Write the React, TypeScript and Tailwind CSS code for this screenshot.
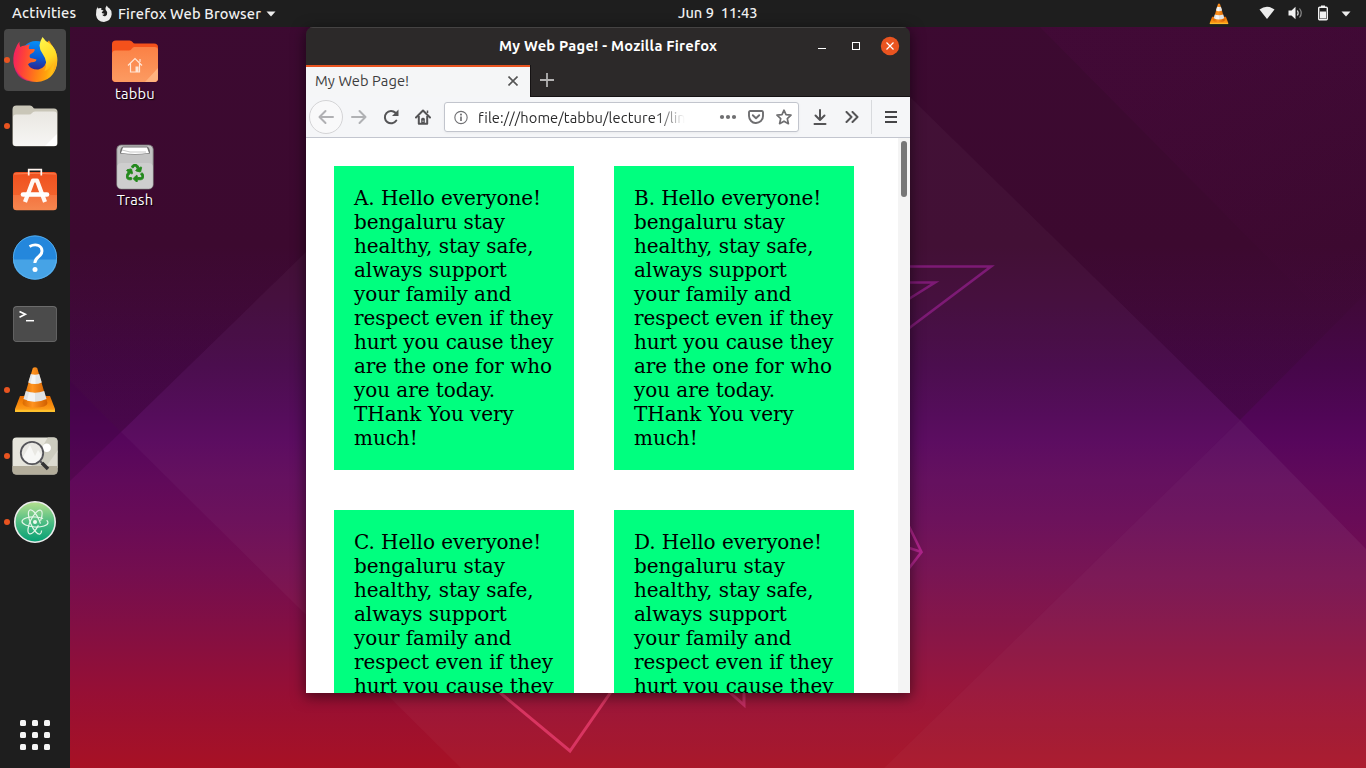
import React from "react";
import { FaRecycle } from "react-icons/fa";

const MESSAGE_LINES = [
  "Hello everyone!",
  "bengaluru stay",
  "healthy, stay safe,",
  "always support",
  "your family and",
  "respect even if they",
  "hurt you cause they",
  "are the one for who",
  "you are today.",
  "THank You very",
  "much!",
];

function Wallpaper() {
  return (
    <svg className="absolute inset-0" width="1366" height="768" viewBox="0 0 1366 768" aria-hidden="true">
      <defs>
        <linearGradient id="sky" gradientUnits="userSpaceOnUse" x1="0" y1="0" x2="0" y2="768">
          <stop offset="0" stopColor="#3c0a31" />
          <stop offset="0.32" stopColor="#3c092f" />
          <stop offset="0.4" stopColor="#41093a" />
          <stop offset="0.475" stopColor="#460749" />
          <stop offset="0.54" stopColor="#500656" />
          <stop offset="0.575" stopColor="#57065c" />
          <stop offset="0.625" stopColor="#600a5a" />
          <stop offset="0.675" stopColor="#680b57" />
          <stop offset="0.745" stopColor="#740e4f" />
          <stop offset="0.818" stopColor="#830f43" />
          <stop offset="0.9" stopColor="#960f35" />
          <stop offset="0.98" stopColor="#a41128" />
          <stop offset="1" stopColor="#a81124" />
        </linearGradient>
        <linearGradient id="shade" gradientUnits="userSpaceOnUse" x1="0" y1="250" x2="0" y2="420">
          <stop offset="0" stopColor="#2a0a12" stopOpacity="0" />
          <stop offset="1" stopColor="#2a0a20" stopOpacity="0.24" />
        </linearGradient>
        <linearGradient id="corner" gradientUnits="userSpaceOnUse" x1="1200" y1="60" x2="1300" y2="290">
          <stop offset="0" stopColor="#5a0850" stopOpacity="0.16" />
          <stop offset="1" stopColor="#5a0850" stopOpacity="0.02" />
        </linearGradient>
      </defs>
      <rect width="1366" height="768" fill="url(#sky)" />
      <polygon points="70,27 306,27 306,252 121,432 70,381" fill="url(#shade)" />
      <polygon points="70,381 121,432 70,481" fill="#200020" opacity="0.18" />
      <polygon points="306,252 910,97 1240,420 884,768 461,768 121,432" fill="#fff" opacity="0.03" />
      <polygon points="910,97 910,27 1366,27 1366,293 1240,420" fill="url(#shade)" />
      <polygon points="1040,27 1366,27 1366,300 1310,300" fill="url(#corner)" />
      <polygon points="1240,420 1366,549 1366,768 884,768" fill="#fff" opacity="0.05" />
      <g fill="none" stroke="#7d1a75" strokeWidth="2.600">
        <path d="M880 266.500H991L880 350" />
        <path d="M880 282.500H935L880 317" />
      </g>
      <path d="M900 508L921.500 552L900 580M900 545L921.500 552" fill="none" stroke="#b0258c" strokeWidth="2.600" />
      <path d="M480 676L570 751L622 676" fill="none" stroke="#d93561" strokeWidth="3" />
      <path d="M718 682L744 705V682" fill="none" stroke="#c42e63" strokeWidth="3" />
    </svg>
  );
}

function Cone({ size, id }: { size: number; id: string }) {
  return (
    <svg width={size} height={size} viewBox="0 0 48 48" aria-hidden="true">
      <defs>
        <linearGradient id={id} x1="0" x2="1" y1="0" y2="0">
          <stop offset="0" stopColor="#d96a00" />
          <stop offset="0.4" stopColor="#ff9320" />
          <stop offset="1" stopColor="#d05f00" />
        </linearGradient>
        <linearGradient id={id + "b"} x1="0" x2="0" y1="0" y2="1">
          <stop offset="0" stopColor="#e86a00" />
          <stop offset="0.55" stopColor="#f78a0c" />
          <stop offset="1" stopColor="#ffa51f" />
        </linearGradient>
      </defs>
      <path d="M9 30H39L44 43V45.500H4V43Z" fill={"url(#" + id + "b)"} />
      <path d="M4 43.800H44V46H4Z" fill="#ffc02c" />
      <path d="M21.800 2Q24 0.500 26.200 2L36.500 37Q36 41.500 24 41.500T11.500 37Z" fill={"url(#" + id + ")"} />
      <path d="M19.800 8Q24 9.500 28.200 8L30.800 16.500Q24 19.500 17.200 16.500Z" fill="#e4e6e8" />
      <path d="M14.800 25Q24 28.500 33.200 25L35.500 33Q24 38.500 12.500 33Z" fill="#e0e2e4" />
      <path d="M21.500 8.800L24.500 8.900V18L19.500 17.400ZM18 26.300L24 27.100V35.700L16 34.700Z" fill="#fff" opacity="0.6" />
    </svg>
  );
}

function FirefoxLogo() {
  return (
    <svg width="48" height="48" viewBox="0 0 48 48" aria-hidden="true">
      <defs>
        <linearGradient id="globe" x1="0.6" y1="0" x2="0.5" y2="1">
          <stop offset="0" stopColor="#0690f8" />
          <stop offset="0.5" stopColor="#0a5ed6" />
          <stop offset="1" stopColor="#35167c" />
        </linearGradient>
        <linearGradient id="fox" x1="0" y1="0.35" x2="1" y2="0.5">
          <stop offset="0" stopColor="#f2215f" />
          <stop offset="0.25" stopColor="#ff4338" />
          <stop offset="0.55" stopColor="#ff7a18" />
          <stop offset="0.8" stopColor="#ffa40c" />
          <stop offset="1" stopColor="#ffd21f" />
        </linearGradient>
        <linearGradient id="flame" x1="0.3" y1="0" x2="0.6" y2="1">
          <stop offset="0" stopColor="#fff44a" />
          <stop offset="0.55" stopColor="#ffdc25" />
          <stop offset="1" stopColor="#ff9a10" />
        </linearGradient>
      </defs>
      <circle cx="25" cy="21" r="16" fill="url(#globe)" />
      <path
        d="M8.500 5.500Q8 8.500 9.200 11Q11.500 9.200 15 9.500Q17 8.500 19 8.200Q17.500 10.500 18 13H23.500Q24.300 14.500 22.500 16.200L18.800 18.700Q18.200 21.500 19.500 22Q23 22.500 25.500 23.500Q25 26.500 20.500 26.200Q17.500 27 17 28.500Q20 34 27.500 33.500Q35.500 31.500 36 22Q36 15 31 11L38 4.500Q40 8 43.500 13Q47.500 21 46 28Q43 44.500 26 46Q8.500 46 3.200 31Q1 22 4 14Q5.500 9 8.500 5.500Z"
        fill="url(#fox)"
      />
      <path
        d="M31.500 1Q29 5 28.500 9.500Q28.500 14 32 18.500Q37.500 26 33.500 35Q39 33.500 42 27Q44.500 36 38 40.500Q46.500 35 46 23Q45.500 12 38.500 7.500Q34 5 31.500 1Z"
        fill="url(#flame)"
      />
      <path d="M3.500 30Q9 43.500 23 45.500Q9 46 4.500 35Z" fill="#d8138a" opacity="0.55" />
    </svg>
  );
}

function FilesIcon() {
  return (
    <svg width="48" height="48" viewBox="0 0 48 48" aria-hidden="true">
      <defs>
        <linearGradient id="paper" x1="0" y1="0" x2="0" y2="1">
          <stop offset="0" stopColor="#e9e7e2" />
          <stop offset="1" stopColor="#f7f6f4" />
        </linearGradient>
      </defs>
      <path d="M5.500 3.500H19Q21 3.500 21.800 5T24 6.500H43Q46.500 6.500 46.500 10V41Q46.500 44.300 43 44.300H5Q1.500 44.300 1.500 41V7.500Q1.500 3.500 5.500 3.500Z" fill="#c9c6b8" />
      <path d="M2 15.500Q2 12.500 5 12.500H18Q20 12.500 21 11T24 9.500H43Q46 9.500 46 12.500V41Q46 44 43 44H5Q2 44 2 41Z" fill="url(#paper)" />
      <path d="M46 32V41Q46 44 43 44H34Z" fill="#fff" />
    </svg>
  );
}

function SoftwareIcon() {
  return (
    <svg width="48" height="48" viewBox="0 0 48 48" aria-hidden="true">
      <defs>
        <linearGradient id="bag" x1="0" y1="0" x2="0" y2="1">
          <stop offset="0" stopColor="#f0501f" />
          <stop offset="0.6" stopColor="#f2622c" />
          <stop offset="0.61" stopColor="#f47440" />
          <stop offset="1" stopColor="#f5864f" />
        </linearGradient>
      </defs>
      <rect x="2" y="4" width="44" height="38.300" rx="3.500" fill="url(#bag)" />
      <path d="M3 6Q24 4.500 45 6" fill="none" stroke="#fa8a5c" strokeWidth="0.900" />
      <path d="M17.700 7.500V1.700H30.300V7.500" fill="none" stroke="#fff4ee" strokeWidth="1.700" />
      <path d="M14 34L22 12.500H26L34 34" fill="none" stroke="#fff8f4" strokeWidth="4.200" strokeLinejoin="round" />
      <path d="M12 26.500H36" stroke="#fff" strokeWidth="4.600" strokeLinecap="round" />
    </svg>
  );
}

function HelpIcon() {
  return (
    <svg width="48" height="48" viewBox="0 0 48 48" aria-hidden="true">
      <circle cx="24" cy="24" r="22" fill="#2487dc" transform="translate(0 -0.500)" />
      <path d="M2 25.500H46A22 20 0 0 1 2 25.500Z" fill="#46a3e6" />
      <circle cx="24" cy="23.500" r="21.600" fill="none" stroke="#5fb4ee" strokeWidth="0.800" />
      <path d="M18.500 12.500Q23.500 9.800 27.500 11.500Q31 13 31 17Q31 20 27.800 22.500Q24 25.500 23.800 29" fill="none" stroke="#fff" strokeWidth="2.900" />
      <circle cx="24" cy="35.500" r="2.500" fill="#fff" />
    </svg>
  );
}

function TerminalIcon() {
  return (
    <svg width="48" height="48" viewBox="0 0 48 48" aria-hidden="true">
      <rect x="2" y="6" width="44" height="36" rx="4" fill="#6c6c6c" />
      <rect x="2.700" y="7" width="42.600" height="34.300" rx="3.500" fill="#4b4b4b" />
      <path d="M8.500 11.500L14.300 14.300L8.500 17.200" fill="none" stroke="#fff" strokeWidth="1.700" />
      <path d="M15 20.700H23" stroke="#fff" strokeWidth="1.500" />
    </svg>
  );
}

function ViewerIcon() {
  return (
    <svg width="48" height="48" viewBox="0 0 48 48" aria-hidden="true">
      <defs>
        <clipPath id="photo">
          <rect x="1.500" y="5.500" width="45" height="37" rx="4" />
        </clipPath>
      </defs>
      <g clipPath="url(#photo)">
        <rect x="1" y="5" width="46" height="38" fill="#e6e5dc" />
        <path d="M37 5H47V20L33 38H18Z" fill="#cdccbf" />
        <path d="M47 18V36H34Z" fill="#dcdad0" />
        <rect x="1" y="34" width="46" height="9" fill="#b3ad9b" />
      </g>
      <circle cx="35.700" cy="15.800" r="4.300" fill="#fff" />
      <circle cx="21" cy="21" r="11" fill="#e9e8e3" />
      <path d="M12 25L19 13L24 24L27 18L31 24Q27 32 21 32Q14 32 12 25Z" fill="#f7f7f5" />
      <circle cx="21" cy="21" r="11.200" fill="none" stroke="#55555a" strokeWidth="1.800" />
      <path d="M29 29L32 32" stroke="#55555a" strokeWidth="2" />
      <path d="M31 31L37 37" stroke="#333" strokeWidth="3.600" />
    </svg>
  );
}

function AtomIcon() {
  return (
    <svg width="48" height="48" viewBox="0 0 48 48" aria-hidden="true">
      <defs>
        <linearGradient id="atom" x1="0" y1="0" x2="0" y2="1">
          <stop offset="0" stopColor="#b5e08e" />
          <stop offset="0.55" stopColor="#45b982" />
          <stop offset="1" stopColor="#05a074" />
        </linearGradient>
      </defs>
      <circle cx="24" cy="24" r="20.200" fill="url(#atom)" stroke="#ececec" strokeWidth="1.600" />
      <g fill="none" stroke="#e4f6e8" strokeWidth="1.200">
        <ellipse cx="24" cy="24" rx="13" ry="5" transform="rotate(3 24 24)" strokeDasharray="52 4" />
        <ellipse cx="24" cy="24" rx="13" ry="4.600" transform="rotate(67 24 24)" strokeDasharray="47 7" />
        <ellipse cx="24" cy="24" rx="13" ry="4.600" transform="rotate(116 24 24)" strokeDasharray="40 5" />
      </g>
      <circle cx="24" cy="24" r="2" fill="#eefaf0" />
    </svg>
  );
}

const DOCK = [
  { name: "firefox", running: true, active: true, icon: <FirefoxLogo /> },
  { name: "files", running: true, active: false, icon: <FilesIcon /> },
  { name: "software", running: false, active: false, icon: <SoftwareIcon /> },
  { name: "help", running: false, active: false, icon: <HelpIcon /> },
  { name: "terminal", running: false, active: false, icon: <TerminalIcon /> },
  { name: "vlc", running: true, active: false, icon: <Cone size={48} id="dockCone" /> },
  { name: "viewer", running: true, active: false, icon: <ViewerIcon /> },
  { name: "atom", running: true, active: false, icon: <AtomIcon /> },
];

function Dock() {
  return (
    <nav className="flex w-[70px] flex-col bg-[#1e1e1e]">
      {DOCK.map((app) => (
        <div key={app.name} className="flex h-[66px] items-center pl-1">
          <div className={app.active ? "flex size-[62px] items-center rounded bg-[#484848]" : "flex size-[62px] items-center"}>
            <span className={app.running ? "size-[6px] rounded-full bg-[#e95420]" : "size-[6px]"} />
            <span className="ml-px">{app.icon}</span>
          </div>
        </div>
      ))}
      <div className="mt-auto mb-[18px] ml-5 grid w-[30px] grid-cols-3 gap-[6px]">
        {Array.from({ length: 9 }, (_, i) => (
          <span key={i} className="size-[6px] rounded-[1.500px] bg-[#f6f6f6]" />
        ))}
      </div>
    </nav>
  );
}

function TopBar() {
  return (
    <header className="relative flex h-[27px] w-full items-center bg-[#1e1e1e] text-[14.67px] font-medium text-[#f0f0f0]">
      <span className="ml-3 w-[66px] pb-px tracking-[0.2px] whitespace-nowrap">Activities</span>
      <svg className="ml-[17px]" width="18" height="18" viewBox="0 0 18 18" aria-hidden="true">
        <path
          d="M2.600 1.500Q2.400 2.800 3 3.600Q4.400 2.900 6.600 3.200Q6 4 6.400 5L8.500 5.200Q8.200 6.500 6.800 7Q6.700 8 7.400 8.200L9.500 8.800Q9 10 7.300 9.800Q8 11.600 10.200 11.200Q12.500 10.500 12.200 7.800Q12 6 10.700 5Q10 2.500 11.800 0.500Q12.500 2.500 14.600 3.500Q17 5.500 16.700 9.300Q16 16 9 17Q2 16.800 1 10Q0.600 5 2.600 1.500Z"
          fill="#ececec"
        />
      </svg>
      <span className="ml-[5px] w-[145px] tracking-[0.14px] whitespace-nowrap">Firefox Web Browser</span>
      <svg className="ml-[3px]" width="10" height="6" viewBox="0 0 10 6" aria-hidden="true">
        <path d="M0.500 0.500H9.500L5 5.500Z" fill="#ececec" />
      </svg>
      <span className="ml-[402px] w-[84px] pb-[2px] whitespace-pre">Jun 9  11:43</span>
      <span className="ml-[446px]">
        <Cone size={22} id="trayCone" />
      </span>
      <svg className="mb-px ml-[29px]" width="16" height="14" viewBox="0 0 16 14" aria-hidden="true">
        <path d="M0.500 3.500Q8 -2 15.500 3.500L8 13Z" fill="#ececec" />
      </svg>
      <svg className="mb-px ml-[13px]" width="16" height="14" viewBox="0 0 16 14" aria-hidden="true">
        <path d="M0.500 4.500H3.500L7.500 0.800V13.200L3.500 9.500H0.500Z" fill="#f2f2f2" />
        <path d="M9.300 4.500Q11 7 9.300 9.500" fill="none" stroke="#d0d0d0" strokeWidth="1.300" />
        <path d="M11.500 2.500Q15 7 11.500 11.500" fill="none" stroke="#8a8a8a" strokeWidth="1.200" />
      </svg>
      <svg className="mb-[2px] ml-[13px]" width="12" height="16" viewBox="0 0 12 16" aria-hidden="true">
        <path d="M4 0.500H8V2H4Z" fill="#f2f2f2" />
        <rect x="1.700" y="2.200" width="8.600" height="12.600" rx="1" fill="none" stroke="#f2f2f2" strokeWidth="1.400" />
        <rect x="3" y="6.500" width="6" height="7" fill="#f2f2f2" />
      </svg>
      <svg className="ml-[12px]" width="10" height="6" viewBox="0 0 10 6" aria-hidden="true">
        <path d="M0.500 0.500H9.500L5 5.500Z" fill="#ececec" />
      </svg>
    </header>
  );
}

function DesktopIcons() {
  return (
    <div className="ml-[25px] flex w-20 flex-col items-center pt-[13px] text-[14.67px] leading-[18px] tracking-[0.2px] text-white [text-shadow:1px_1px_1px_#000]">
      <svg width="46" height="43" viewBox="0 0 46 43" aria-hidden="true">
        <defs>
          <linearGradient id="home" x1="0" y1="0" x2="0" y2="1">
            <stop offset="0" stopColor="#fb8145" />
            <stop offset="1" stopColor="#fc9b62" />
          </linearGradient>
        </defs>
        <path d="M4 0.500H17.500Q19.500 0.500 20.500 2T23 3.500H42Q46 3.500 46 7V38Q46 42 42 42H4Q0 42 0 38V4Q0 0.500 4 0.500Z" fill="#f4511b" />
        <path d="M0 14Q0 10.500 3.500 10.500H17Q19 10.500 20 8.500T23 7H42.500Q46 7 46 10V38Q46 42 42 42H4Q0 42 0 38Z" fill="url(#home)" />
        <path d="M46 28V38Q46 42 42 42H33Z" fill="#ffb27f" />
        <path d="M16 25.500L23 18.500L30 25.500M18.500 23.500V32H27.500V23.500M28 22V19" fill="none" stroke="#ffe5d5" strokeWidth="1.200" />
        <path d="M23.500 26.500H26.500V32H23.500Z" fill="#ffe5d5" />
      </svg>
      <span className="mt-[2px]">tabbu</span>
      <svg className="mt-[40px]" width="38" height="48" viewBox="0 0 38 48" aria-hidden="true">
        <rect x="0.800" y="2" width="36.400" height="44" rx="4.500" fill="#c3c3c3" stroke="#777" strokeWidth="0.800" />
        <rect x="1.300" y="20" width="35.400" height="25.500" rx="4" fill="#cecece" />
        <path d="M7 3.500H31Q34 4.500 34 10.500Q19 12.500 4 10.500Q4 4.500 7 3.500Z" fill="#6e6e6e" />
        <path d="M7 4.500H31L33 10Q19 12 5 10Z" fill="#fff" />
        <path d="M6 7L14 9H30" fill="none" stroke="#b7b7b7" strokeWidth="0.800" />
        <FaRecycle x={10} y={21} size={18} color="#23891c" stroke="#23891c" strokeWidth={26} />
      </svg>
      <span>Trash</span>
    </div>
  );
}

function TitleBar() {
  return (
    <div className="flex h-[38px] items-center border-t border-[#454343] bg-[#2c2929]">
      <span className="ml-[193px] w-[220px] pb-[2px] text-[14.67px] font-bold tracking-[0.24px] whitespace-nowrap text-white">
        My Web Page! - Mozilla Firefox
      </span>
      <svg className="mb-px ml-[99px]" width="8" height="8" viewBox="0 0 8 8" aria-hidden="true">
        <path d="M0 6.500H8" stroke="#fff" strokeWidth="1" />
      </svg>
      <svg className="mb-px ml-[26px]" width="8" height="8" viewBox="0 0 8 8" aria-hidden="true">
        <rect x="0.500" y="0.500" width="7" height="7" fill="none" stroke="#fff" />
      </svg>
      <svg className="mb-px ml-[20px]" width="20" height="20" viewBox="0 0 20 20" aria-hidden="true">
        <circle cx="10" cy="10" r="9.200" fill="#e95420" />
        <path d="M6.500 6.500L13.500 13.500M13.500 6.500L6.500 13.500" stroke="#fff" strokeWidth="1.200" />
      </svg>
    </div>
  );
}

function TabStrip() {
  return (
    <div className="flex h-8 bg-[#2c2929]">
      <div className="flex w-[224px] items-center border-t-2 border-[#e95420] bg-[#f5f6f7] pb-[2px] text-[14.67px] text-[#3d3d3d]">
        <span className="ml-[9px] w-[100px] tracking-[0.08px] whitespace-nowrap">My Web Page!</span>
        <svg className="ml-[93px]" width="10" height="10" viewBox="0 0 10 10" aria-hidden="true">
          <path d="M0.500 0.500L9.500 9.500M9.500 0.500L0.500 9.500" stroke="#555" strokeWidth="1.600" />
        </svg>
      </div>
      <div className="flex flex-1 border-b border-l border-[#151213] pt-2 pl-[9px]">
        <svg width="14" height="14" viewBox="0 0 14 14" aria-hidden="true">
          <path d="M7 0V14M0 7H14" stroke="#b4b3b3" strokeWidth="1.800" />
        </svg>
      </div>
    </div>
  );
}

function Toolbar() {
  return (
    <div className="flex h-[41px] items-center border-b border-[#c3c6cf] bg-[#f5f6f8]">
      <div className="flex w-10 justify-center">
        <span className="flex size-[34px] items-center justify-center rounded-full border border-[#d4d4d6] bg-[#f9f9fa]">
          <svg width="16" height="16" viewBox="0 0 16 16" fill="none" stroke="#b0b0b3" strokeWidth="2" strokeLinecap="round" strokeLinejoin="round" aria-hidden="true">
            <path d="M15 8H1.500M7.500 2L1.500 8L7.500 14" />
          </svg>
        </span>
      </div>
      <div className="flex w-[26px] justify-center">
        <svg width="16" height="16" viewBox="0 0 16 16" fill="none" stroke="#b0b1b4" strokeWidth="2" strokeLinecap="round" strokeLinejoin="round" aria-hidden="true">
          <path d="M1 8H14.500M8.500 2L14.500 8L8.500 14" />
        </svg>
      </div>
      <div className="ml-[3px] flex w-8 justify-center">
        <svg width="16" height="16" viewBox="0 0 16 16" aria-hidden="true">
          <path d="M13.300 11.500A6.200 6.200 0 1 1 12.500 3.800" fill="none" stroke="#545456" strokeWidth="2" strokeLinecap="round" />
          <path d="M15.500 0.500V7H9Z" fill="#545456" />
        </svg>
      </div>
      <div className="flex w-8 justify-center">
        <svg width="16" height="16" viewBox="0 0 16 16" aria-hidden="true">
          <path d="M1 8.500L8 1.500L15 8.500" fill="none" stroke="#545456" strokeWidth="2" strokeLinecap="round" strokeLinejoin="round" />
          <path d="M3.800 7V14.800H12.200V7" fill="none" stroke="#545456" strokeWidth="2" strokeLinejoin="round" />
          <path d="M6.200 15V10.200Q6.200 8.800 8 8.800T9.800 10.200V15Z" fill="#545456" />
          <path d="M7.600 11.500H8.400V13H7.600Z" fill="#f5f6f8" />
          <path d="M12.500 1.500V4" stroke="#545456" strokeWidth="1.500" />
        </svg>
      </div>
      <div className="ml-[5px] flex h-[30px] w-[355px] items-center rounded-[3px] border border-[#c2c5cd] bg-white shadow-[0_1px_3px_rgba(0,0,0,0.05)]">
        <svg className="ml-[9px]" width="14" height="15" viewBox="0 0 15 15" aria-hidden="true">
          <circle cx="7.500" cy="7.500" r="6.600" fill="none" stroke="#717174" strokeWidth="1.200" />
          <path d="M7.500 6.500V11.200" stroke="#717174" strokeWidth="1.800" />
          <circle cx="7.500" cy="4.400" r="1.100" fill="#717174" />
        </svg>
        <span className="ml-[10px] w-[207px] overflow-hidden pt-px text-[14.67px] leading-[22px] tracking-[0.1px] whitespace-nowrap text-[#2a2a2b] [mask-image:linear-gradient(to_right,#000_86%,transparent)]">
          file:///home/tabbu/lecture1/lin
        </span>
        <svg className="ml-[34px]" width="18" height="6" viewBox="0 0 18 6" fill="#6f6f71" aria-hidden="true">
          <circle cx="3" cy="3" r="2.100" />
          <circle cx="9" cy="3" r="2.100" />
          <circle cx="15" cy="3" r="2.100" />
        </svg>
        <svg className="ml-[11px]" width="16" height="14" viewBox="0 0 16 14" fill="none" stroke="#6f6f71" aria-hidden="true">
          <path d="M2.300 1H13.700Q15 1 15 2.300V6Q15 9.300 12.900 11T8 13T3.100 11T1 6V2.300Q1 1 2.300 1Z" strokeWidth="1.900" />
          <path d="M4.800 5.200L8 8.300L11.200 5.200" strokeWidth="1.900" strokeLinecap="round" strokeLinejoin="round" />
        </svg>
        <svg className="ml-[12px]" width="16" height="16" viewBox="0 0 16 16" fill="none" stroke="#6f6f71" strokeWidth="1.700" strokeLinejoin="round" aria-hidden="true">
          <path d="M8 1.200L10 5.700L15 6.200L11.300 9.600L12.400 14.700L8 12.200L3.600 14.700L4.700 9.600L1 6.200L6 5.700Z" />
        </svg>
      </div>
      <div className="ml-[5px] flex w-8 justify-center">
        <svg width="14" height="16" viewBox="0 0 14 16" fill="none" stroke="#545456" strokeWidth="2" strokeLinecap="round" strokeLinejoin="round" aria-hidden="true">
          <path d="M7 1V10.500M2.500 6.500L7 11L11.500 6.500M1.500 15H12.500" />
        </svg>
      </div>
      <div className="flex w-8 justify-center">
        <svg width="14" height="12" viewBox="0 0 14 12" fill="none" stroke="#545456" strokeWidth="2" strokeLinecap="round" strokeLinejoin="round" aria-hidden="true">
          <path d="M1.500 1L6.500 6L1.500 11M7.500 1L12.500 6L7.500 11" />
        </svg>
      </div>
      <div className="ml-[3px] h-[34px] w-px bg-[#d8dadd]" />
      <div className="ml-[3px] flex w-8 justify-center">
        <svg width="12" height="12" viewBox="0 0 12 12" stroke="#454547" strokeWidth="2" aria-hidden="true">
          <path d="M0 1H12M0 6H12M0 11H12" />
        </svg>
      </div>
    </div>
  );
}

function Card({ letter }: { letter: string }) {
  const text = MESSAGE_LINES.join("\n");
  return (
    <p className="h-[304px] bg-[#00ff7f] p-5 tracking-[-0.07px] whitespace-pre">{`${letter}. ${text}`}</p>
  );
}

function BrowserWindow() {
  return (
    <section className="absolute top-[27px] left-[306px] flex h-[666px] w-[604px] flex-col rounded-t-[7px] shadow-[0_3px_14px_1px_rgba(0,0,0,0.5)]">
      <div className="flex h-full flex-col overflow-hidden rounded-t-[7px]">
        <TitleBar />
        <TabStrip />
        <Toolbar />
        <div className="flex min-h-0 flex-1 bg-white">
          <main className="grid flex-1 grid-cols-[240px_240px] content-start gap-10 overflow-hidden pt-7 pl-7 font-['DejaVu_Serif',serif] text-[20px] leading-6 text-black">
            {["A", "B", "C", "D"].map((letter) => (
              <Card key={letter} letter={letter} />
            ))}
          </main>
          <div className="flex w-3 justify-center bg-[#f4f4f4] pt-[3px]">
            <span className="h-14 w-[6px] rounded-full bg-[#777]" />
          </div>
        </div>
      </div>
    </section>
  );
}

export default function App() {
  return (
    <div className="relative flex h-[768px] w-[1366px] flex-col overflow-hidden bg-[#3c0a31] font-['Ubuntu','Noto_Sans',sans-serif]">
      <Wallpaper />
      <TopBar />
      <div className="relative flex flex-1">
        <Dock />
        <DesktopIcons />
      </div>
      <BrowserWindow />
    </div>
  );
}
